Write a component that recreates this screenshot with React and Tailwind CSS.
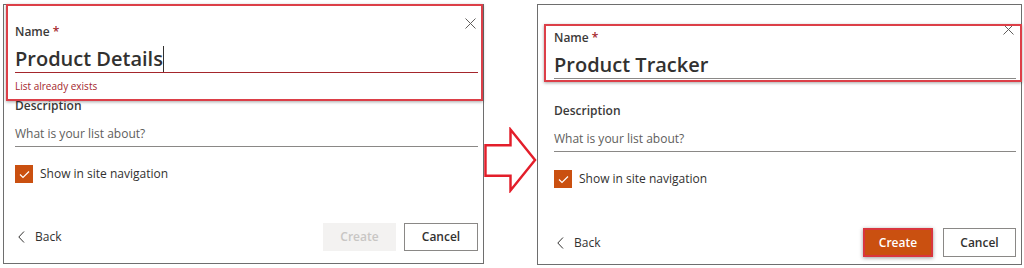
import React from "react";

const font = { fontFamily: '"Open Sans", "Noto Sans", Arial, sans-serif' };

function CloseX({ className }) {
  return (
    <svg className={className} width="11" height="11" viewBox="0 0 11 11">
      <path d="M0.5 0.5 L10.5 10.5 M10.5 0.5 L0.5 10.5" stroke="#605e5c" strokeWidth="1" fill="none" />
    </svg>
  );
}

function Check() {
  return (
    <div className="w-[18px] h-[18px] bg-[#ca5010] flex items-center justify-center shrink-0">
      <svg width="11" height="9" viewBox="0 0 11 9">
        <path d="M1 4.5 L4 7.5 L10 1.5" stroke="#ffffff" strokeWidth="1.2" fill="none" />
      </svg>
    </div>
  );
}

function BackLink() {
  return (
    <div className="flex items-center text-[12px] text-[#323130]">
      <svg width="7" height="12" viewBox="0 0 7 12" className="ml-[3px]">
        <path d="M6 0.5 L0.8 6 L6 11.5" stroke="#323130" strokeWidth="1" fill="none" />
      </svg>
      <span className="ml-[10px]">Back</span>
    </div>
  );
}

export default function App() {
  return (
    <div className="w-[1024px] h-[268px] bg-white flex items-start" style={font}>
      {/* Left dialog */}
      <div className="relative ml-[3px] mt-[4px] w-[481px] h-[260px] border border-[#6e6e6e] pl-[11px] pr-[5px] pt-[18px] flex flex-col">
        <CloseX className="absolute left-[461px] top-[13px]" />
        <div className="text-[12px] leading-[18px] font-semibold text-[#3b3a39]">
          Name <span className="text-[#a4262c]">*</span>
        </div>
        <div className="mt-[4px] h-[28px] border-b border-[#a4262c] flex items-center">
          <span className="text-[20px] leading-[28px] font-semibold text-[#323130]">Product Details</span>
          <span className="w-px h-[26px] bg-[#323130]" />
        </div>
        <div className="mt-[6px] text-[10px] leading-[14px] text-[#a4262c]">List already exists</div>
        <div className="mt-[4px] text-[12px] leading-[18px] font-semibold text-[#3b3a39]">Description</div>
        <div className="mt-[6px] h-[26px] border-b border-[#8a8886] flex items-center text-[12px] text-[#605e5c]">
          What is your list about?
        </div>
        <div className="mt-[18px] flex items-center gap-[7px]">
          <Check />
          <span className="text-[12px] text-[#323130]">Show in site navigation</span>
        </div>
        <div className="mt-[40px] flex items-center justify-between">
          <BackLink />
          <div className="flex gap-[8px]">
            <div className="w-[73px] h-[28px] bg-[#f3f2f1] text-[#c8c6c4] text-[12px] font-semibold flex items-center justify-center">Create</div>
            <div className="w-[74px] h-[28px] border border-[#8a8886] bg-white text-[#323130] text-[12px] font-semibold flex items-center justify-center">Cancel</div>
          </div>
        </div>
        {/* annotation */}
        <div className="absolute left-[2px] top-[-1px] w-[477px] h-[97px] border-2 border-[#dc3f48] shadow-[0_1px_3px_rgba(0,0,0,0.35)] pointer-events-none" />
      </div>

      {/* Arrow */}
      <div className="w-[53px] mt-[127px] flex justify-start">
        <svg width="54" height="66" viewBox="0 0 54 66">
          <polygon points="1.5,18 27,18 27,2 52,33 27,64 27,49 1.5,49" fill="#ffffff" stroke="#e31e2a" strokeWidth="2.5" strokeLinejoin="miter" />
        </svg>
      </div>

      {/* Right dialog */}
      <div className="relative mt-[4px] w-[485px] h-[261px] border border-[#6e6e6e] pl-[16px] pr-[5px] pt-[24px] flex flex-col">
        <CloseX className="absolute left-[465px] top-[19px]" />
        <div className="text-[12px] leading-[18px] font-semibold text-[#3b3a39]">
          Name <span className="text-[#a4262c]">*</span>
        </div>
        <div className="mt-[4px] h-[28px] border-b border-[#8a8886] flex items-center">
          <span className="text-[20px] leading-[28px] font-semibold text-[#323130]">Product Tracker</span>
        </div>
        <div className="mt-[23px] text-[12px] leading-[18px] font-semibold text-[#3b3a39]">Description</div>
        <div className="mt-[6px] h-[26px] border-b border-[#8a8886] flex items-center text-[12px] text-[#605e5c]">
          What is your list about?
        </div>
        <div className="mt-[18px] flex items-center gap-[7px]">
          <Check />
          <span className="text-[12px] text-[#323130]">Show in site navigation</span>
        </div>
        <div className="mt-[40px] flex items-center justify-between">
          <BackLink />
          <div className="flex gap-[10px]">
            <div className="w-[70px] h-[29px] bg-[#ca5010] border-2 border-[#d9363e] shadow-[0_1px_4px_rgba(0,0,0,0.4)] text-white text-[12px] font-semibold flex items-center justify-center">Create</div>
            <div className="w-[73px] h-[29px] border border-[#8a8886] bg-white text-[#323130] text-[12px] font-semibold flex items-center justify-center">Cancel</div>
          </div>
        </div>
        {/* annotation */}
        <div className="absolute left-[6px] top-[19px] w-[478px] h-[58px] border-2 border-[#dc3f48] shadow-[0_1px_3px_rgba(0,0,0,0.35)] pointer-events-none" />
      </div>
    </div>
  );
}
